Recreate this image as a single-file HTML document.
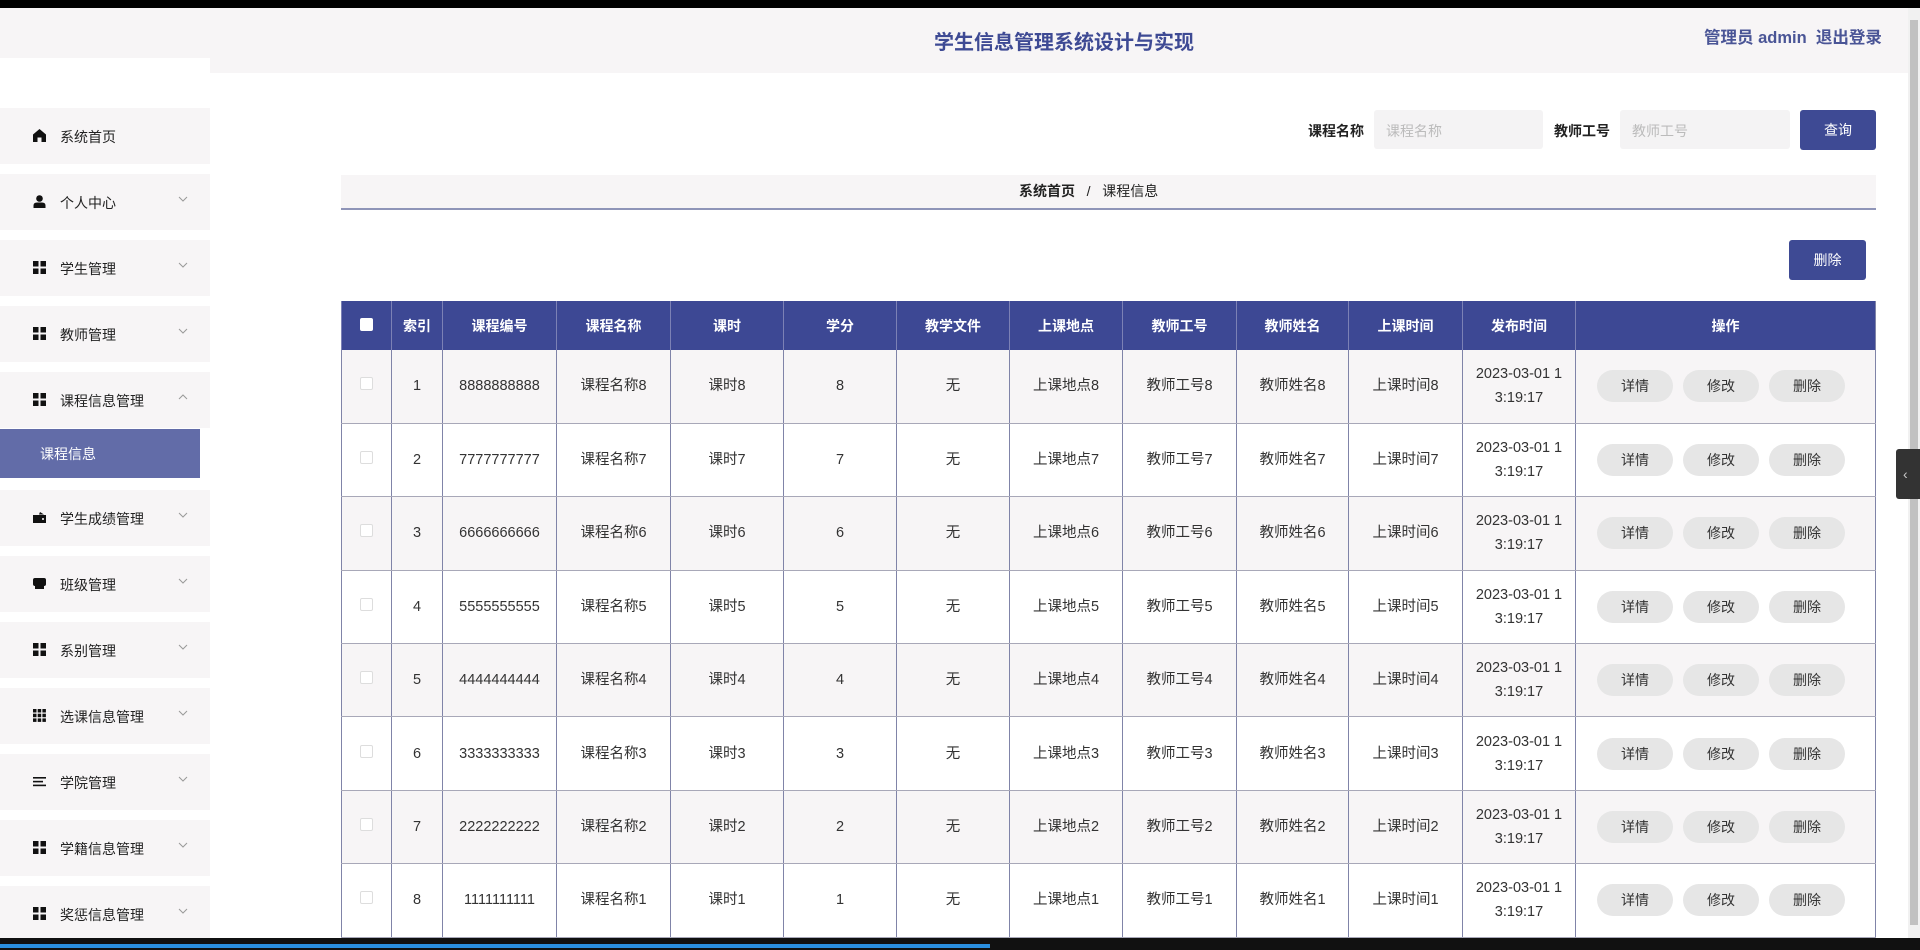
<!DOCTYPE html>
<html><head><meta charset="utf-8">
<style>
*{margin:0;padding:0;box-sizing:border-box}
body{width:1920px;height:950px;overflow:hidden;background:#fff;font-family:"Liberation Sans","Noto Sans CJK SC",sans-serif;color:#333;position:relative}
.abs{position:absolute}
.topbar{left:0;top:0;width:1920px;height:8px;background:#000}
.header{left:0;top:8px;width:1908px;height:65px;background:#f7f5f6}
.side-top{left:0;top:58px;width:210px;height:15px;background:#fff}
.title{left:0;width:2128px;top:26px;text-align:center;font-size:20px;font-weight:bold;color:#3e4a94}
.user{left:1704px;top:24px;font-size:16.5px;font-weight:bold;color:#4a5596;white-space:nowrap}
.mi{left:0;width:210px;height:56px;background:#f7f5f6;font-size:14px;color:#222}
.mi .t{position:absolute;left:60px;top:19px}
.mi .ic{position:absolute;left:33px;top:21px;width:13px;height:13px}
.mi .ch{position:absolute;left:178px;top:20px;width:10px;height:10px}
.sub{left:0;top:429px;width:200px;height:49px;background:#626ca8;color:#fff;font-size:14px}
.sub span{position:absolute;left:40px;top:15px}
.lbl{font-size:14px;font-weight:bold;color:#222}
.inp{background:#f4f3f4;height:39px;border-radius:3px;font-size:14px;color:#bbb;padding:11px 12px}
.btn{background:#3e4a94;color:#fff;font-size:14px;text-align:center;border-radius:3px}
table{position:absolute;left:341px;top:301px;width:1535px;border-collapse:collapse;font-size:14.5px}
th{background:#3d4894;color:#fff;font-weight:bold;height:49px;border-left:1px solid #7c81b5;font-size:14px}
td{height:73.4px;text-align:center;border-left:1px solid #8084a8;border-bottom:1px solid #a8a8b8;color:#333;line-height:24px}
tr:nth-child(even) td{background:#f7f5f6}
td:last-child,th:last-child{border-right:1px solid #8084a8}
td:last-child{text-align:left;padding-left:21px}
.cb{display:inline-block;width:13px;height:13px;border:1px solid #ddd;background:#fff;border-radius:2px}
th .cb{border:none;background:#fff}
.pb{display:inline-block;width:76px;height:32px;line-height:32px;text-align:center;border-radius:16px;background:#e6e6e6;font-size:14px;color:#333;margin-right:10px}
</style></head><body>
<div class="abs topbar"></div>
<div class="abs header"></div>
<div class="abs side-top"></div>
<div class="abs title">学生信息管理系统设计与实现</div>
<div class="abs user">管理员 admin&nbsp;&nbsp;退出登录</div>

<div class="abs mi" style="top:108px"><svg class="ic" viewBox="0 0 13 13"><path d="M6.5 0L0 5.5V13h4.5V8.5h4V13H13V5.5Z" fill="#111"/></svg><span class="t">系统首页</span></div>
<div class="abs mi" style="top:174px"><svg class="ic" viewBox="0 0 13 13"><circle cx="6.5" cy="3.5" r="3.3" fill="#111"/><path d="M0.5 13V10.5Q0.5 7.5 4 7.5H9Q12.5 7.5 12.5 10.5V13Z" fill="#111"/></svg><span class="t">个人中心</span><svg class="ch" viewBox="0 0 10 10"><path d="M1 3l4 4 4-4" fill="none" stroke="#999" stroke-width="1"/></svg></div>
<div class="abs mi" style="top:240px"><svg class="ic" viewBox="0 0 13 13"><rect x="0" y="0" width="5.5" height="5.5" fill="#111"/><rect x="7.5" y="0" width="5.5" height="5.5" fill="#111"/><rect x="0" y="7.5" width="5.5" height="5.5" fill="#111"/><rect x="7.5" y="7.5" width="5.5" height="5.5" fill="#111"/></svg><span class="t">学生管理</span><svg class="ch" viewBox="0 0 10 10"><path d="M1 3l4 4 4-4" fill="none" stroke="#999"/></svg></div>
<div class="abs mi" style="top:306px"><svg class="ic" viewBox="0 0 13 13"><rect x="0" y="0" width="5.5" height="5.5" fill="#111"/><rect x="7.5" y="0" width="5.5" height="5.5" fill="#111"/><rect x="0" y="7.5" width="5.5" height="5.5" fill="#111"/><rect x="7.5" y="7.5" width="5.5" height="5.5" fill="#111"/></svg><span class="t">教师管理</span><svg class="ch" viewBox="0 0 10 10"><path d="M1 3l4 4 4-4" fill="none" stroke="#999"/></svg></div>
<div class="abs mi" style="top:372px"><svg class="ic" viewBox="0 0 13 13"><rect x="0" y="0" width="5.5" height="5.5" fill="#111"/><rect x="7.5" y="0" width="5.5" height="5.5" fill="#111"/><rect x="0" y="7.5" width="5.5" height="5.5" fill="#111"/><rect x="7.5" y="7.5" width="5.5" height="5.5" fill="#111"/></svg><span class="t">课程信息管理</span><svg class="ch" viewBox="0 0 10 10"><path d="M1 7l4-4 4 4" fill="none" stroke="#999"/></svg></div>
<div class="abs sub"><span>课程信息</span></div>
<div class="abs mi" style="top:490px"><svg class="ic" viewBox="0 0 13 13"><path d="M0 4H13V12H0Z" fill="#111"/><path d="M7 1L11 3.5H6Z" fill="#111"/><circle cx="10" cy="8" r="1" fill="#fff"/></svg><span class="t">学生成绩管理</span><svg class="ch" viewBox="0 0 10 10"><path d="M1 3l4 4 4-4" fill="none" stroke="#999"/></svg></div>
<div class="abs mi" style="top:556px"><svg class="ic" viewBox="0 0 13 13"><rect x="0" y="1" width="13" height="8" rx="2" fill="#111"/><rect x="2" y="9" width="9" height="3" fill="#111"/></svg><span class="t">班级管理</span><svg class="ch" viewBox="0 0 10 10"><path d="M1 3l4 4 4-4" fill="none" stroke="#999"/></svg></div>
<div class="abs mi" style="top:622px"><svg class="ic" viewBox="0 0 13 13"><rect x="0" y="0" width="5.5" height="5.5" fill="#111"/><rect x="7.5" y="0" width="5.5" height="5.5" fill="#111"/><rect x="0" y="7.5" width="5.5" height="5.5" fill="#111"/><rect x="7.5" y="7.5" width="5.5" height="5.5" fill="#111"/></svg><span class="t">系别管理</span><svg class="ch" viewBox="0 0 10 10"><path d="M1 3l4 4 4-4" fill="none" stroke="#999"/></svg></div>
<div class="abs mi" style="top:688px"><svg class="ic" viewBox="0 0 13 13"><g fill="#111"><rect x="0" y="0" width="3.5" height="3.5"/><rect x="4.7" y="0" width="3.5" height="3.5"/><rect x="9.4" y="0" width="3.5" height="3.5"/><rect x="0" y="4.7" width="3.5" height="3.5"/><rect x="4.7" y="4.7" width="3.5" height="3.5"/><rect x="9.4" y="4.7" width="3.5" height="3.5"/><rect x="0" y="9.4" width="3.5" height="3.5"/><rect x="4.7" y="9.4" width="3.5" height="3.5"/><rect x="9.4" y="9.4" width="3.5" height="3.5"/></g></svg><span class="t">选课信息管理</span><svg class="ch" viewBox="0 0 10 10"><path d="M1 3l4 4 4-4" fill="none" stroke="#999"/></svg></div>
<div class="abs mi" style="top:754px"><svg class="ic" viewBox="0 0 13 13"><g fill="#111"><rect x="0" y="2" width="13" height="1.6"/><rect x="0" y="5.8" width="10" height="1.6"/><rect x="0" y="9.6" width="13" height="1.6"/></g></svg><span class="t">学院管理</span><svg class="ch" viewBox="0 0 10 10"><path d="M1 3l4 4 4-4" fill="none" stroke="#999"/></svg></div>
<div class="abs mi" style="top:820px"><svg class="ic" viewBox="0 0 13 13"><rect x="0" y="0" width="5.5" height="5.5" fill="#111"/><rect x="7.5" y="0" width="5.5" height="5.5" fill="#111"/><rect x="0" y="7.5" width="5.5" height="5.5" fill="#111"/><rect x="7.5" y="7.5" width="5.5" height="5.5" fill="#111"/></svg><span class="t">学籍信息管理</span><svg class="ch" viewBox="0 0 10 10"><path d="M1 3l4 4 4-4" fill="none" stroke="#999"/></svg></div>
<div class="abs mi" style="top:886px"><svg class="ic" viewBox="0 0 13 13"><rect x="0" y="0" width="5.5" height="5.5" fill="#111"/><rect x="7.5" y="0" width="5.5" height="5.5" fill="#111"/><rect x="0" y="7.5" width="5.5" height="5.5" fill="#111"/><rect x="7.5" y="7.5" width="5.5" height="5.5" fill="#111"/></svg><span class="t">奖惩信息管理</span><svg class="ch" viewBox="0 0 10 10"><path d="M1 3l4 4 4-4" fill="none" stroke="#999"/></svg></div>

<div class="abs lbl" style="left:1308px;top:121px">课程名称</div>
<div class="abs inp" style="left:1374px;top:110px;width:169px">课程名称</div>
<div class="abs lbl" style="left:1554px;top:121px">教师工号</div>
<div class="abs inp" style="left:1620px;top:110px;width:170px">教师工号</div>
<div class="abs btn" style="left:1800px;top:110px;width:76px;height:40px;line-height:40px">查询</div>

<div class="abs" style="left:341px;top:175px;width:1535px;height:35px;background:#f7f5f6;border-bottom:2px solid #8f95b8;font-size:14px;line-height:33px;color:#222"><span style="position:absolute;left:678px"><b>系统首页</b>&nbsp;&nbsp;&nbsp;/&nbsp;&nbsp;&nbsp;课程信息</span></div>

<div class="abs btn" style="left:1789px;top:240px;width:77px;height:40px;line-height:40px">删除</div>

<table>
<colgroup><col style="width:50px"><col style="width:51px"><col style="width:114px"><col style="width:114px"><col style="width:113px"><col style="width:113px"><col style="width:113px"><col style="width:113px"><col style="width:114px"><col style="width:112px"><col style="width:114px"><col style="width:113px"><col></colgroup>
<tr><th><span class="cb"></span></th><th>索引</th><th>课程编号</th><th>课程名称</th><th>课时</th><th>学分</th><th>教学文件</th><th>上课地点</th><th>教师工号</th><th>教师姓名</th><th>上课时间</th><th>发布时间</th><th>操作</th></tr>
<tr><td><span class="cb"></span></td><td>1</td><td>8888888888</td><td>课程名称8</td><td>课时8</td><td>8</td><td>无</td><td>上课地点8</td><td>教师工号8</td><td>教师姓名8</td><td>上课时间8</td><td>2023-03-01 1<br>3:19:17</td><td><span class="pb">详情</span><span class="pb">修改</span><span class="pb">删除</span></td></tr>
<tr><td><span class="cb"></span></td><td>2</td><td>7777777777</td><td>课程名称7</td><td>课时7</td><td>7</td><td>无</td><td>上课地点7</td><td>教师工号7</td><td>教师姓名7</td><td>上课时间7</td><td>2023-03-01 1<br>3:19:17</td><td><span class="pb">详情</span><span class="pb">修改</span><span class="pb">删除</span></td></tr>
<tr><td><span class="cb"></span></td><td>3</td><td>6666666666</td><td>课程名称6</td><td>课时6</td><td>6</td><td>无</td><td>上课地点6</td><td>教师工号6</td><td>教师姓名6</td><td>上课时间6</td><td>2023-03-01 1<br>3:19:17</td><td><span class="pb">详情</span><span class="pb">修改</span><span class="pb">删除</span></td></tr>
<tr><td><span class="cb"></span></td><td>4</td><td>5555555555</td><td>课程名称5</td><td>课时5</td><td>5</td><td>无</td><td>上课地点5</td><td>教师工号5</td><td>教师姓名5</td><td>上课时间5</td><td>2023-03-01 1<br>3:19:17</td><td><span class="pb">详情</span><span class="pb">修改</span><span class="pb">删除</span></td></tr>
<tr><td><span class="cb"></span></td><td>5</td><td>4444444444</td><td>课程名称4</td><td>课时4</td><td>4</td><td>无</td><td>上课地点4</td><td>教师工号4</td><td>教师姓名4</td><td>上课时间4</td><td>2023-03-01 1<br>3:19:17</td><td><span class="pb">详情</span><span class="pb">修改</span><span class="pb">删除</span></td></tr>
<tr><td><span class="cb"></span></td><td>6</td><td>3333333333</td><td>课程名称3</td><td>课时3</td><td>3</td><td>无</td><td>上课地点3</td><td>教师工号3</td><td>教师姓名3</td><td>上课时间3</td><td>2023-03-01 1<br>3:19:17</td><td><span class="pb">详情</span><span class="pb">修改</span><span class="pb">删除</span></td></tr>
<tr><td><span class="cb"></span></td><td>7</td><td>2222222222</td><td>课程名称2</td><td>课时2</td><td>2</td><td>无</td><td>上课地点2</td><td>教师工号2</td><td>教师姓名2</td><td>上课时间2</td><td>2023-03-01 1<br>3:19:17</td><td><span class="pb">详情</span><span class="pb">修改</span><span class="pb">删除</span></td></tr>
<tr><td><span class="cb"></span></td><td>8</td><td>1111111111</td><td>课程名称1</td><td>课时1</td><td>1</td><td>无</td><td>上课地点1</td><td>教师工号1</td><td>教师姓名1</td><td>上课时间1</td><td>2023-03-01 1<br>3:19:17</td><td><span class="pb">详情</span><span class="pb">修改</span><span class="pb">删除</span></td></tr>
</table>

<div class="abs" style="left:1908px;top:8px;width:12px;height:930px;background:#f1f1f1"></div>
<div class="abs" style="left:1910px;top:20px;width:8px;height:905px;background:#c1c1c1"></div>
<div class="abs" style="left:1896px;top:449px;width:24px;height:50px;background:#333;border-radius:3px 0 0 3px;color:#ccc;font-size:14px;line-height:50px;padding-left:7px">‹</div>
<div class="abs" style="left:0;top:938px;width:1920px;height:12px;background:#111"></div>
<div class="abs" style="left:0;top:944px;width:990px;height:4px;background:#2a8fe0"></div>
</body></html>
